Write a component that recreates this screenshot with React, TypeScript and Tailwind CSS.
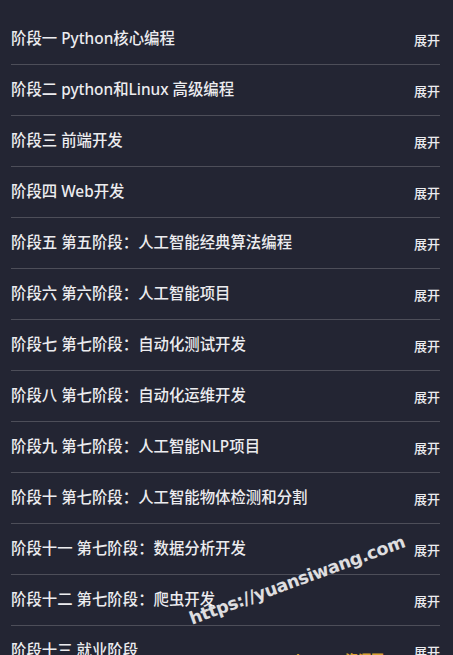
import React from "react";

const stages = [
  "阶段一 Python核心编程",
  "阶段二 python和Linux 高级编程",
  "阶段三 前端开发",
  "阶段四 Web开发",
  "阶段五 第五阶段：人工智能经典算法编程",
  "阶段六 第六阶段：人工智能项目",
  "阶段七 第七阶段：自动化测试开发",
  "阶段八 第七阶段：自动化运维开发",
  "阶段九 第七阶段：人工智能NLP项目",
  "阶段十 第七阶段：人工智能物体检测和分割",
  "阶段十一 第七阶段：数据分析开发",
  "阶段十二 第七阶段：爬虫开发",
  "阶段十三 就业阶段",
];

const App = () => {
  return (
    <div
      className="relative h-[655px] w-[453px] overflow-hidden bg-[#232533] pl-[11px] pr-[13px] pt-[14px]"
      style={{ fontFamily: '"Noto Sans", "Noto Sans CJK SC", sans-serif' }}
    >
      {stages.map((title, i) => (
        <div
          key={i}
          className="flex h-[51px] items-center justify-between border-b border-[#4d4e59] text-[#ececef]"
        >
          <span className="text-[15.4px] font-medium leading-none">{title}</span>
          <span className="mt-[3px] text-[13px] font-medium leading-none">展开</span>
        </div>
      ))}

      {/* watermark */}
      <div
        className="pointer-events-none absolute left-[190px] top-[606px] origin-left -rotate-[20deg] text-[17.5px] font-semibold tracking-[-0.4px] text-white/85"
        style={{ fontFamily: '"DejaVu Sans", sans-serif' }}
      >
        https://yuansiwang.com
      </div>
      <div className="pointer-events-none absolute left-[296px] top-[650px] text-[13px] font-bold text-[#d9a233]">
        https://资源网
      </div>
    </div>
  );
};

export default App;
